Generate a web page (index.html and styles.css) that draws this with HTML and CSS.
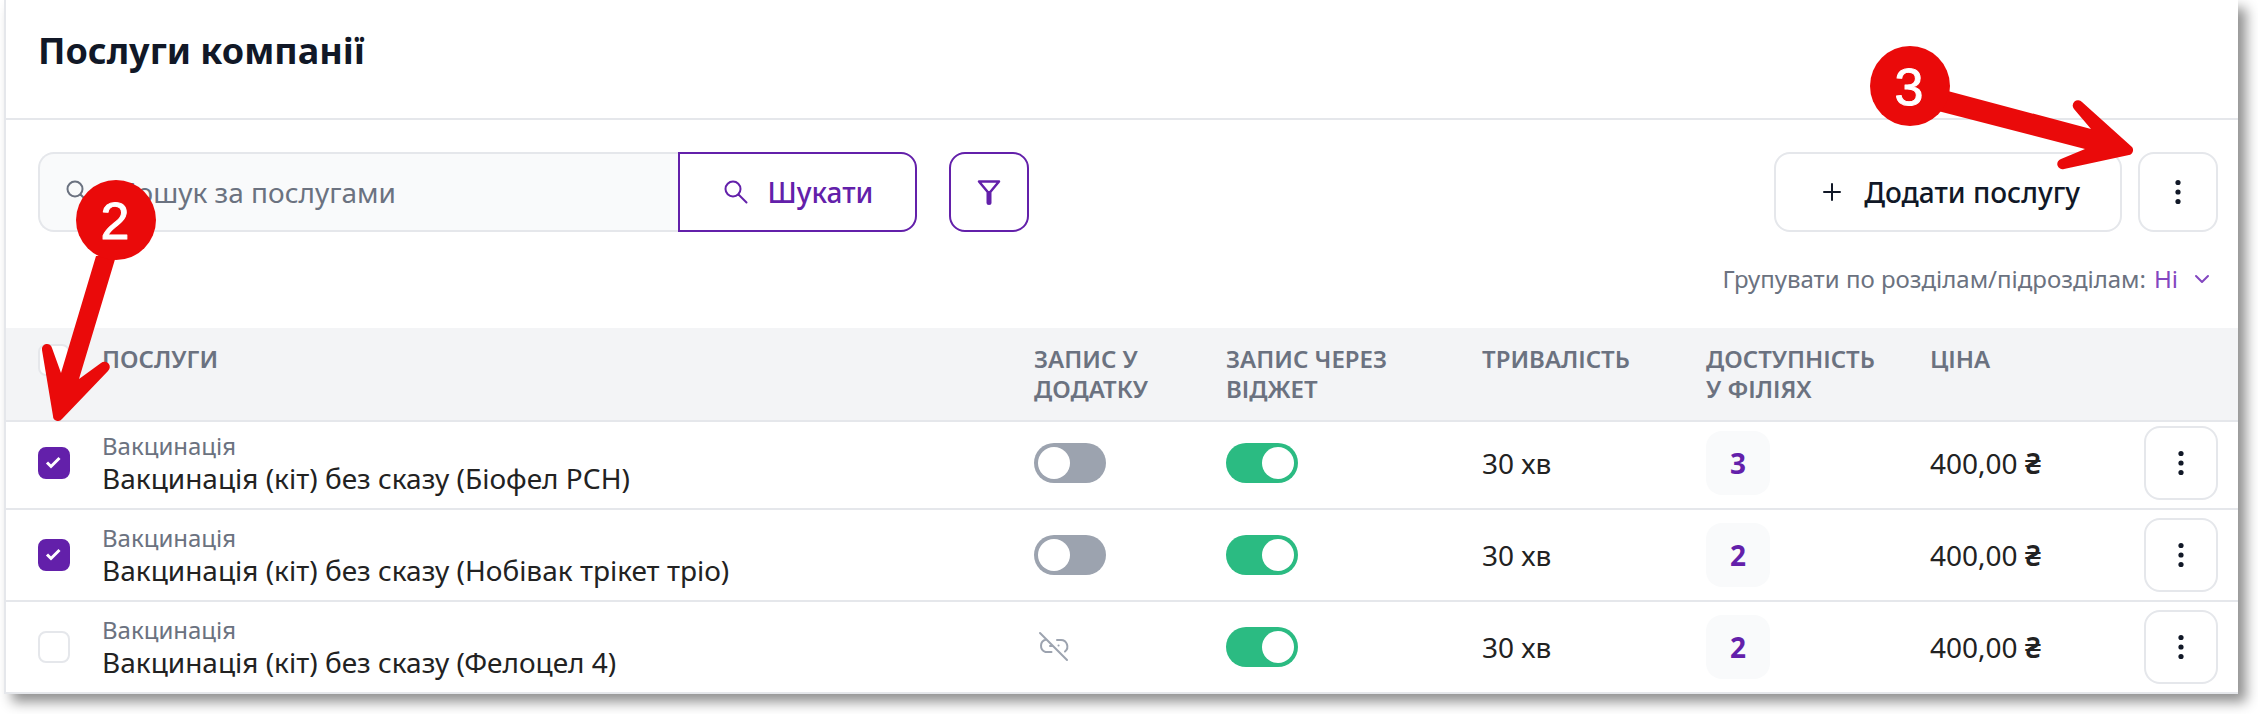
FILE: index.html
```html
<!DOCTYPE html>
<html lang="uk">
<head>
<meta charset="utf-8">
<title>Послуги компанії</title>
<link rel="stylesheet" href="styles.css">
</head>
<body>
<svg class="sprite" aria-hidden="true">
  <symbol id="i-search" viewBox="0 0 28 28"><circle cx="11" cy="11" r="7.5"/><path d="M16.5 16.5l8 8"/></symbol>
  <symbol id="i-dots" viewBox="0 0 28 28"><g fill="currentColor" stroke="none"><circle cx="14" cy="4.5" r="2.6"/><circle cx="14" cy="14" r="2.6"/><circle cx="14" cy="23.5" r="2.6"/></g></symbol>
  <symbol id="i-link-off" viewBox="0 0 40 40"><path d="M6 6l27 27M12 12.5a6.500 6.500 0 0 0-.5 12.500h6M23 13h4a6.500 6.500 0 0 1 4 11.500M16 19h2M24.500 18.500h.1"/></symbol>
</svg>
<main class="card">
  <header class="head"><h1>Послуги компанії</h1></header>
  <div class="toolbar">
    <form class="search">
      <label class="field">
        <svg class="icon"><use href="#i-search"/></svg>
        <input type="text" placeholder="Пошук за послугами" aria-label="Пошук за послугами">
      </label>
      <button type="button" class="btn btn-search"><svg class="icon"><use href="#i-search"/></svg>Шукати</button>
    </form>
    <button type="button" class="btn btn-square btn-filter" aria-label="Фільтр"><svg class="icon" viewBox="0 0 28 28"><path d="M4 3.500h20l-10 12z" stroke-width="2.500"/><path d="M14 15.500v9" stroke-width="5"/></svg></button>
    <div class="actions">
      <button type="button" class="btn btn-add"><svg class="icon" viewBox="0 0 28 28"><path d="M14 6v16M6 14h16"/></svg>Додати послугу</button>
      <button type="button" class="btn btn-square" aria-label="Ще"><svg class="icon"><use href="#i-dots"/></svg></button>
    </div>
  </div>
  <div class="grouping">
    <span>Групувати по розділам/підрозділам:</span>
    <button type="button" class="group-value">Ні<svg class="chevron" viewBox="0 0 16 10"><path d="M2 2l6 6 6-6"/></svg></button>
  </div>
  <table class="services">
    <colgroup><col class="c-check"><col><col class="c-app"><col class="c-widget"><col class="c-mid"><col class="c-mid"><col class="c-price"><col class="c-menu"></colgroup>
    <thead>
      <tr>
        <th><input type="checkbox" class="check" aria-label="Вибрати всі"></th>
        <th>ПОСЛУГИ</th>
        <th>ЗАПИС У<br>ДОДАТКУ</th>
        <th>ЗАПИС ЧЕРЕЗ<br>ВІДЖЕТ</th>
        <th>ТРИВАЛІСТЬ</th>
        <th>ДОСТУПНІСТЬ<br>У ФІЛІЯХ</th>
        <th>ЦІНА</th>
        <th></th>
      </tr>
    </thead>
    <tbody>
      <tr>
        <td><input type="checkbox" class="check" checked aria-label="Вибрати послугу"></td>
        <td><div class="category">Вакцинація</div><div class="name">Вакцинація (кіт) без сказу (Біофел РСН)</div></td>
        <td><input type="checkbox" class="toggle" aria-label="Запис у додатку"></td>
        <td><input type="checkbox" class="toggle" checked aria-label="Запис через віджет"></td>
        <td>30 хв</td>
        <td><span class="badge">3</span></td>
        <td>400,00 <span class="currency">₴</span></td>
        <td><button type="button" class="btn btn-row" aria-label="Дії"><svg class="icon"><use href="#i-dots"/></svg></button></td>
      </tr>
      <tr>
        <td><input type="checkbox" class="check" checked aria-label="Вибрати послугу"></td>
        <td><div class="category">Вакцинація</div><div class="name">Вакцинація (кіт) без сказу (Нобівак трікет тріо)</div></td>
        <td><input type="checkbox" class="toggle" aria-label="Запис у додатку"></td>
        <td><input type="checkbox" class="toggle" checked aria-label="Запис через віджет"></td>
        <td>30 хв</td>
        <td><span class="badge">2</span></td>
        <td>400,00 <span class="currency">₴</span></td>
        <td><button type="button" class="btn btn-row" aria-label="Дії"><svg class="icon"><use href="#i-dots"/></svg></button></td>
      </tr>
      <tr>
        <td><input type="checkbox" class="check" aria-label="Вибрати послугу"></td>
        <td><div class="category">Вакцинація</div><div class="name">Вакцинація (кіт) без сказу (Фелоцел 4)</div></td>
        <td><svg class="link-off"><use href="#i-link-off"/></svg></td>
        <td><input type="checkbox" class="toggle" checked aria-label="Запис через віджет"></td>
        <td>30 хв</td>
        <td><span class="badge">2</span></td>
        <td>400,00 <span class="currency">₴</span></td>
        <td><button type="button" class="btn btn-row" aria-label="Дії"><svg class="icon"><use href="#i-dots"/></svg></button></td>
      </tr>
    </tbody>
  </table>
  <svg class="callout callout-check" viewBox="0 0 120 250">
    <path d="M58 80L23 197L14 172A5 5 0 0 0 4 174L15 240A5 5 0 0 0 24 243L70 195A5 5 0 0 0 63 187L41 203L78 80Z"/>
    <circle cx="78" cy="44" r="40"/><text x="77" y="63">2</text>
  </svg>
  <svg class="callout callout-menu" viewBox="0 0 270 130">
    <path d="M74 44L221 83L204 63A5 5 0 0 1 212 56L262 101A5 5 0 0 1 259 109L194 123A5 5 0 0 1 191 113L215 103L68 65Z"/>
    <circle cx="40" cy="40" r="40"/><text x="39" y="59">3</text>
  </svg>
</main>
</body>
</html>
```
FILE: styles.css
```css
* { box-sizing: border-box; }

body {
  margin: 0;
  padding: 0 20px 20px 4px;
  background: #fff;
  font-family: "Noto Sans", sans-serif;
  font-size: 28px;
  line-height: 36px;
  color: #222;
}

.sprite { position: absolute; width: 0; height: 0; }

svg { fill: none; stroke: currentColor; stroke-width: 2; stroke-linecap: round; stroke-linejoin: round; flex: none; }

.card {
  position: relative;
  background: #fff;
  border-left: 2px solid #e5e7eb;
  box-shadow: 8px 8px 12px rgba(0, 0, 0, 0.44);
}

.head {
  padding: 27px 32px 43px;
  border-bottom: 2px solid #e5e7eb;
}

h1 { margin: 0; font-size: 36px; line-height: 48px; font-weight: 700; color: #111827; }

.toolbar { display: flex; gap: 32px; padding: 32px 20px 0 32px; }

.search { display: flex; flex: 0 0 879px; }

.field {
  display: flex;
  flex: 1;
  align-items: center;
  gap: 24px;
  padding-left: 24px;
  background: #f9fafb;
  border: 2px solid #e5e7eb;
  border-right: 0;
  border-radius: 16px 0 0 16px;
  color: #6b7280;
}

.field input {
  flex: 1;
  min-width: 0;
  border: 0;
  padding: 0;
  background: none;
  outline: 0;
  font: inherit;
  color: inherit;
}

.field input::placeholder { color: #6b7280; opacity: 1; }

.icon { width: 28px; height: 28px; }

.btn {
  display: flex;
  align-items: center;
  justify-content: center;
  gap: 18px;
  height: 80px;
  padding: 0;
  border: 2px solid #e5e7eb;
  border-radius: 16px;
  background: #fff;
  font: inherit;
  font-weight: 500;
  color: #111827;
}

.btn-search { width: 239px; border-color: #6320aa; border-radius: 0 16px 16px 0; color: #6320aa; }
.btn-square { width: 80px; }
.btn-filter { border-color: #6320aa; color: #6320aa; }
.actions { display: flex; gap: 16px; margin-left: auto; }
.btn-add { padding: 0 40px 0 42px; }
.btn-row { width: 74px; height: 74px; }

.grouping {
  display: flex;
  align-items: center;
  justify-content: flex-end;
  gap: 8px;
  padding: 29px 28px 31px 0;
  font-size: 24px;
  color: #6b7280;
}

.group-value {
  display: flex;
  align-items: center;
  gap: 16px;
  padding: 0;
  border: 0;
  background: none;
  font: inherit;
  color: #8347c0;
}

.chevron { width: 16px; height: 10px; }

.services { width: 100%; border-collapse: separate; border-spacing: 0; table-layout: fixed; }
.c-check { width: 96px; }
.c-app { width: 192px; }
.c-widget { width: 256px; }
.c-mid { width: 224px; }
.c-price { width: 214px; }
.c-menu { width: 94px; }

th {
  padding: 16px 0;
  background: #f3f4f6;
  border-bottom: 2px solid #e5e7eb;
  text-align: left;
  vertical-align: top;
  font-size: 24px;
  line-height: 30px;
  font-weight: 600;
  color: #6b7280;
}

td { height: 92px; padding: 4px 0; border-bottom: 2px solid #e5e7eb; vertical-align: middle; }
tbody tr:first-child td { height: 88px; padding-top: 0; }
th:first-child, tbody tr td:first-child { padding-left: 32px; }

.category { font-size: 24px; line-height: 30px; color: #6b7280; }
.name { line-height: 34px; }
.currency { font-weight: 600; }

.check {
  display: block;
  appearance: none;
  width: 32px;
  height: 32px;
  margin: 0;
  border: 2px solid #e5e7eb;
  border-radius: 8px;
  background: #fff;
}

.check:checked {
  border-color: #6320aa;
  background: #6320aa url("data:image/svg+xml,%3Csvg xmlns='http://www.w3.org/2000/svg' viewBox='0 0 28 28'%3E%3Cpath d='M7 13.500l4 4 8.500-8.500' fill='none' stroke='white' stroke-width='3'/%3E%3C/svg%3E") center / 28px no-repeat;
}

.toggle {
  display: flow-root;
  appearance: none;
  width: 72px;
  height: 40px;
  margin: 0;
  border-radius: 20px;
  background: #9ca3af;
}

.toggle::before {
  content: "";
  display: block;
  width: 32px;
  height: 32px;
  margin: 4px;
  border-radius: 50%;
  background: #fff;
}

.toggle:checked { background: #2bbb82; }
.toggle:checked::before { margin-left: 36px; }

.link-off { display: block; width: 40px; height: 40px; color: #9ca3af; }

.badge {
  display: flex;
  align-items: center;
  justify-content: center;
  width: 64px;
  height: 64px;
  border-radius: 16px;
  background: #f9fafb;
  font-weight: 700;
  color: #6320aa;
}

.callout { position: absolute; fill: #ea0a0a; stroke: none; pointer-events: none; }
.callout text { fill: #fff; stroke: #fff; stroke-width: 1; font-family: "Liberation Sans", sans-serif; font-size: 52px; text-anchor: middle; }
.callout-check { left: 32px; top: 176px; width: 120px; height: 250px; }
.callout-menu { right: 98px; top: 46px; width: 270px; height: 130px; }
```
